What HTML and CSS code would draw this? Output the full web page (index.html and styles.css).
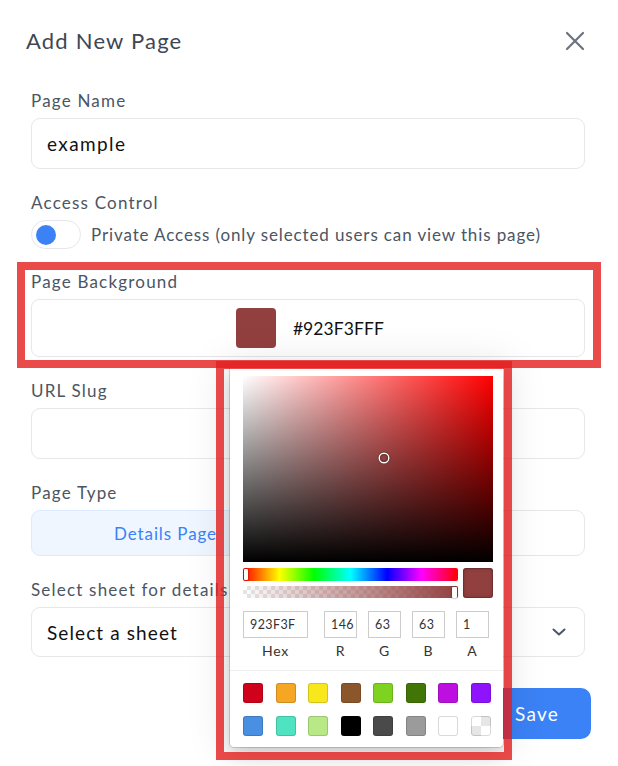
FILE: index.html
```html
<!DOCTYPE html>
<html>
<head>
<meta charset="utf-8">
<link rel="stylesheet" href="styles.css">
</head>
<body>
<div class="modal">
  <div class="header">
    <h2 class="title">Add New Page</h2>
    <button class="close" aria-label="Close">
      <svg width="20" height="20" viewBox="0 0 20 20"><path d="M2 2L18 18M18 2L2 18" stroke="#6b7280" stroke-width="2.2" stroke-linecap="round"/></svg>
    </button>
  </div>
  <div class="form">
    <div class="field">
      <div class="label">Page Name</div>
      <div class="input">example</div>
    </div>
    <div class="field field-toggle">
      <div class="label">Access Control</div>
      <div class="toggle-row">
        <span class="toggle"><span class="knob"></span></span>
        <span class="toggle-text">Private Access (only selected users can view this page)</span>
      </div>
    </div>
    <div class="field">
      <div class="label">Page Background</div>
      <div class="color-input"><span class="swatch"></span><span class="hex">#923F3FFF</span></div>
    </div>
    <div class="field">
      <div class="label">URL Slug</div>
      <div class="input"></div>
    </div>
    <div class="field">
      <div class="label">Page Type</div>
      <div class="segments">
        <div class="seg seg-active">Details Page</div>
        <div class="seg">List Page</div>
      </div>
    </div>
    <div class="field field-last">
      <div class="label">Select sheet for details page</div>
      <div class="select">
        <span>Select a sheet</span>
        <svg width="14" height="8" viewBox="0 0 14 8"><path d="M1.5 1.5L7 6.5L12.5 1.5" fill="none" stroke="#4b5563" stroke-width="2" stroke-linecap="round" stroke-linejoin="round"/></svg>
      </div>
    </div>
    <div class="actions">
      <button class="btn-cancel">Cancel</button>
      <button class="btn-save">Save</button>
    </div>
  </div>

  <div class="picker">
    <div class="sat">
      <div class="sat-white"></div>
      <div class="sat-black"></div>
      <div class="sat-pointer"></div>
    </div>
    <div class="sliders">
      <div class="bars">
        <div class="hue"><span class="hue-pointer"></span></div>
        <div class="alpha"><div class="alpha-grad"></div><span class="alpha-pointer"></span></div>
      </div>
      <div class="preview"></div>
    </div>
    <div class="fields">
      <div class="fcol fcol-hex"><div class="fbox">923F3F</div><div class="flabel">Hex</div></div>
      <div class="fcol"><div class="fbox">146</div><div class="flabel">R</div></div>
      <div class="fcol"><div class="fbox">63</div><div class="flabel">G</div></div>
      <div class="fcol"><div class="fbox">63</div><div class="flabel">B</div></div>
      <div class="fcol"><div class="fbox">1</div><div class="flabel">A</div></div>
    </div>
    <div class="presets">
      <span class="p" style="background:#D0021B"></span>
      <span class="p" style="background:#F5A623"></span>
      <span class="p" style="background:#F8E71C"></span>
      <span class="p" style="background:#8B572A"></span>
      <span class="p" style="background:#7ED321"></span>
      <span class="p" style="background:#417505"></span>
      <span class="p" style="background:#BD10E0"></span>
      <span class="p" style="background:#9013FE"></span>
      <span class="p" style="background:#4A90E2"></span>
      <span class="p" style="background:#50E3C2"></span>
      <span class="p" style="background:#B8E986"></span>
      <span class="p" style="background:#000000"></span>
      <span class="p" style="background:#4A4A4A"></span>
      <span class="p" style="background:#9B9B9B"></span>
      <span class="p" style="background:#FFFFFF"></span>
      <span class="p p-clear"></span>
    </div>
  </div>

  <div class="mark mark-1"></div>
  <div class="mark mark-2"></div>
</div>
</body>
</html>
```

FILE: styles.css
```css
* { box-sizing: border-box; }
html, body { margin: 0; padding: 0; background: #fff; }
body { width: 618px; height: 766px; overflow: hidden; font-family: "Lato", "Noto Sans", sans-serif; }

.modal { position: relative; width: 618px; height: 766px; }

.header { display: flex; align-items: center; justify-content: space-between; padding: 28px 31px 37px 26px; height: 91px; }
.title { margin: 0; font-size: 22px; line-height: 26px; font-weight: 400; color: #3f4654; letter-spacing: 1.2px; }
.close { border: 0; background: none; padding: 0; width: 20px; height: 20px; display: flex; margin-right: 2px; }

.form { padding: 0 33px 0 31px; }
.field { margin-bottom: 24px; }
.field-toggle { margin-bottom: 23px; }
.field-last { margin-bottom: 31px; }
.label { font-size: 17px; line-height: 20px; color: #4b5563; margin-bottom: 7px; letter-spacing: 1.2px; }

.input { height: 51px; border: 1px solid #e5e7eb; border-radius: 9px; padding: 0 15px; display: flex; align-items: center; font-size: 19px; color: #111; letter-spacing: 1.4px; }

.toggle-row { display: flex; align-items: center; gap: 10px; height: 29px; }
.toggle { width: 50px; height: 29px; border: 1px solid #e5e7eb; border-radius: 15px; display: flex; align-items: center; padding-left: 4px; background: #fff; }
.knob { width: 20px; height: 20px; border-radius: 50%; background: #3b82f6; }
.toggle-text { font-size: 17px; color: #4b5563; letter-spacing: 0.88px; }

.color-input { height: 58px; border: 1px solid #e5e7eb; border-radius: 8px; display: flex; align-items: center; justify-content: center; gap: 17px; padding-left: 4px; }
.swatch { width: 40px; height: 40px; border-radius: 4px; background: #923F3F; }
.hex { font-size: 17.5px; color: #111; letter-spacing: 0.1px; }

.segments { display: grid; grid-template-columns: 1fr 1fr; gap: 16px; }
.seg { height: 46px; border: 1px solid #e5e7eb; border-radius: 9px; display: flex; align-items: center; justify-content: center; font-size: 17px; color: #4b5563; background: #fff; letter-spacing: 0.9px; }
.seg-active { background: #eff6ff; border-color: #dbeafe; color: #3b82f6; }

.select { height: 50px; border: 1px solid #e5e7eb; border-radius: 9px; padding: 0 18px 0 15px; display: flex; align-items: center; justify-content: space-between; font-size: 19px; color: #111; letter-spacing: 1.1px; }

.actions { display: flex; justify-content: flex-end; gap: 12px; margin-right: -6px; }
.btn-cancel, .btn-save { height: 51px; border-radius: 10px; font-family: inherit; font-size: 19px; padding: 0; letter-spacing: 1.2px; }
.btn-cancel { width: 100px; border: 1px solid #e5e7eb; background: #fff; color: #4b5563; }
.btn-save { width: 108px; border: 0; background: #3b82f6; color: #fff; }

/* color picker */
.picker { position: absolute; left: 230px; top: 368px; width: 273px; height: 379px; background: #fff; border-radius: 0 0 4px 4px; padding: 8px 10px 0 13px; box-shadow: rgba(0,0,0,0.15) 0 0 0 1px, rgba(0,0,0,0.15) 0 8px 16px, rgba(0,0,0,0.10) 0 0 40px 6px; }
.sat { position: relative; width: 250px; height: 186px; background: #ff0000; }
.sat-white { position: absolute; inset: 0; background: linear-gradient(to right, #fff, rgba(255,255,255,0)); }
.sat-black { position: absolute; inset: 0; background: linear-gradient(to top, #000, rgba(0,0,0,0)); }
.sat-pointer { position: absolute; left: 137px; top: 78px; width: 8px; height: 8px; border-radius: 50%; box-shadow: 0 0 0 1.5px #fff, inset 0 0 1px 1px rgba(0,0,0,0.3), 0 0 1px 2px rgba(0,0,0,0.4); }

.sliders { display: flex; gap: 5px; margin-top: 6px; }
.bars { width: 215px; display: flex; flex-direction: column; gap: 5px; }
.hue { position: relative; height: 13px; border-radius: 2px; background: linear-gradient(to right, #f00 0%, #ff0 17%, #0f0 33%, #0ff 50%, #00f 67%, #f0f 83%, #f00 100%); }
.hue-pointer { position: absolute; left: 1px; top: 1px; width: 4px; height: 11px; background: #fff; border-radius: 1px; box-shadow: 0 0 2px rgba(0,0,0,0.6); }
.alpha { position: relative; height: 12px; border-radius: 2px; background-color: #fff; background-image: linear-gradient(45deg, #e6e6e6 25%, transparent 25%, transparent 75%, #e6e6e6 75%), linear-gradient(45deg, #e6e6e6 25%, transparent 25%, transparent 75%, #e6e6e6 75%); background-size: 8px 8px; background-position: 0 0, 4px 4px; }
.alpha-grad { position: absolute; inset: 0; border-radius: 2px; background: linear-gradient(to right, rgba(146,63,63,0), rgb(146,63,63)); }
.alpha-pointer { position: absolute; right: 1px; top: 1px; width: 5px; height: 11px; background: #fff; border-radius: 1px; box-shadow: 0 0 2px rgba(0,0,0,0.6); }
.preview { width: 30px; height: 30px; border-radius: 3px; background: #923F3F; box-shadow: inset 0 0 0 1px rgba(0,0,0,0.15), inset 0 0 4px rgba(0,0,0,0.25); }

.fields { display: flex; margin-top: 13px; gap: 11px; }
.fcol { width: 33px; display: flex; flex-direction: column; align-items: center; }
.fcol-hex { width: 65px; margin-right: 5px; }
.fbox { width: 100%; height: 27px; box-shadow: inset 0 0 0 1px #ccc; font-size: 12.5px; color: #333; padding: 0 0 0 7px; display: flex; align-items: center; letter-spacing: 0.4px; }
.flabel { font-size: 14px; color: #333; margin-top: 4px; line-height: 18px; letter-spacing: 0.8px; }

.presets { margin: 10px -10px 0 -13px; border-top: 1px solid #eee; padding: 12px 10px 0 13px; display: grid; grid-template-columns: repeat(8, 20px); column-gap: 12.5px; row-gap: 13px; }
.p { width: 20px; height: 20px; border-radius: 3px; box-shadow: inset 0 0 0 1px rgba(0,0,0,0.15); }
.p-clear { background-color: #fff; background-image: linear-gradient(45deg, #e6e6e6 25%, transparent 25%, transparent 75%, #e6e6e6 75%), linear-gradient(45deg, #e6e6e6 25%, transparent 25%, transparent 75%, #e6e6e6 75%); background-size: 20px 20px; background-position: 0 0, 10px 10px; }

/* annotation outlines */
.mark { position: absolute; border: 8px solid rgba(228, 30, 30, 0.8); pointer-events: none; }
.mark-1 { left: 17px; top: 262px; width: 584px; height: 106px; }
.mark-2 { left: 216px; top: 361px; width: 296px; height: 399px; }
```
